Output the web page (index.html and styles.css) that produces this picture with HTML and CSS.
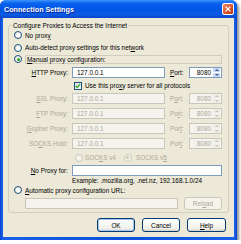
FILE: index.html
```html
<!DOCTYPE html>
<html lang="en">
<head>
  <meta charset="UTF-8">
  <title>Connection Settings</title>
  <link rel="stylesheet" href="styles.css">
</head>
<body>
  <div class="window">
    <!-- Barra de título -->
    <div class="titlebar">
      <span class="title">Connection Settings</span>
      <span class="close">
        <svg viewBox="0 0 10 10" width="8" height="8"><path d="M2 2 L8 8 M8 2 L2 8" stroke="#fff" stroke-width="1.6" /></svg>
      </span>
    </div>

    <div class="client">
      <div class="group">
        <span class="legend">Configure Proxies to Access the Internet</span>

        <div class="opt r1"><span class="radio"></span><span>No prox<u>y</u></span></div>
        <div class="opt r2"><span class="radio"></span><span>Auto-detect proxy settings for this net<u>w</u>ork</span></div>
        <div class="opt r3"><span class="radio on"></span><span class="focus"><u>M</u>anual proxy configuration:</span></div>

        <!-- Servidores proxy -->
        <div class="proxies">
          <label class="lbl"><u>H</u>TTP Proxy:</label>
          <div class="field">127.0.0.1</div>
          <label class="plbl"><u>P</u>ort:</label>
          <div class="field port"><span class="num">8080</span><span class="spin"><i class="up"></i><i class="down"></i></span></div>

          <div class="check-row"><span class="check"><svg viewBox="0 0 8 8" width="6" height="6"><path d="M1 4 L3 6 L7 1.5" fill="none" stroke="#21a121" stroke-width="1.6" /></svg></span><span>Use this pro<u>x</u>y server for all protocols</span></div>

          <label class="lbl off"><u>S</u>SL Proxy:</label>
          <div class="field off">127.0.0.1</div>
          <label class="plbl off">P<u>o</u>rt:</label>
          <div class="field port off"><span class="num">8080</span><span class="spin"><i class="up"></i><i class="down"></i></span></div>

          <label class="lbl off"><u>F</u>TP Proxy:</label>
          <div class="field off">127.0.0.1</div>
          <label class="plbl off">Po<u>r</u>t:</label>
          <div class="field port off"><span class="num">8080</span><span class="spin"><i class="up"></i><i class="down"></i></span></div>

          <label class="lbl off"><u>G</u>opher Proxy:</label>
          <div class="field off">127.0.0.1</div>
          <label class="plbl off">Por<u>t</u>:</label>
          <div class="field port off"><span class="num">8080</span><span class="spin"><i class="up"></i><i class="down"></i></span></div>

          <label class="lbl off">SO<u>C</u>KS Host:</label>
          <div class="field off">127.0.0.1</div>
          <label class="plbl off">Por<u>t</u>:</label>
          <div class="field port off"><span class="num">8080</span><span class="spin"><i class="up"></i><i class="down"></i></span></div>

          <div class="socks off">
            <span class="opt-in"><span class="radio off"></span><span>SOC<u>K</u>S v4</span></span>
            <span class="opt-in"><span class="radio off on"></span><span>SOCKS v<u>5</u></span></span>
          </div>

          <label class="lbl"><u>N</u>o Proxy for:</label>
          <div class="field wide"></div>

          <div class="example">Example: .mozilla.org, .net.nz, 192.168.1.0/24</div>
        </div>

        <div class="opt r4"><span class="radio"></span><span><u>A</u>utomatic proxy configuration URL:</span></div>
        <div class="url-row">
          <div class="field off url"></div>
          <span class="btn off">Rel<u>o</u>ad</span>
        </div>
      </div>

      <!-- Botones -->
      <div class="buttons">
        <span class="btn default">OK</span>
        <span class="btn">Cancel</span>
        <span class="btn"><u>H</u>elp</span>
      </div>
    </div>
  </div>
</body>
</html>
```

FILE: styles.css
```css
* {
  margin: 0;
  padding: 0;
  box-sizing: border-box;
}

body {
  background: #fff;
  font-family: "Liberation Sans", Arial, sans-serif;
  font-size: 6.4px;
  color: #000;
}

u {
  text-decoration: underline;
  text-underline-offset: 0.5px;
}

/* Ventana */
.window {
  width: 237px;
  height: 240px;
  display: flex;
  flex-direction: column;
  background: linear-gradient(to right, #0a3fc8, #1660ea 2px, #0a50dc 50%, #1660ea calc(100% - 2px), #0a3fc8);
  border-radius: 6px 6px 0 0;
  box-shadow: 2px 2px 3px rgba(0, 0, 0, 0.45);
}

.titlebar {
  height: 18px;
  display: flex;
  align-items: center;
  justify-content: space-between;
  padding: 0 3px 0 4px;
  border-radius: 6px 6px 0 0;
  background: linear-gradient(to bottom, #3d95ff 0%, #0a62ec 18%, #0055e8 50%, #0a5ae2 82%, #0847cc 100%);
}

.title {
  color: #fff;
  font-weight: bold;
  font-size: 7.2px;
  text-shadow: 1px 1px 0 #0a1f8a;
}

.close {
  width: 12px;
  height: 12px;
  border: 1px solid #fff;
  border-radius: 2px;
  background: linear-gradient(135deg, #f08c6c, #d4512c 60%, #b83a1a);
  display: flex;
  align-items: center;
  justify-content: center;
}

.client {
  flex: 1;
  margin: 0 3px 3px;
  background: #ece9d8;
  padding: 7px 5px 5px;
}

/* Marco de grupo */
.group {
  position: relative;
  border: 1px solid #d0d0bf;
  border-radius: 3px;
  padding: 3px 0 2px;
}

.legend {
  position: absolute;
  top: -5px;
  left: 3px;
  padding: 0 1px;
  background: #ece9d8;
  color: #000;
  line-height: 9px;
}

.opt {
  display: flex;
  align-items: center;
  gap: 3px;
  padding-left: 5px;
}
.r1 { height: 12px; }
.r2 { height: 13px; }
.r3 { height: 10px; margin-bottom: 1px; }
.r4 { height: 12px; }

.radio {
  width: 8px;
  height: 8px;
  flex: none;
  border: 1px solid #1c5180;
  border-radius: 50%;
  background: radial-gradient(circle at 60% 60%, #fff 30%, #dcd9cd);
  display: flex;
  align-items: center;
  justify-content: center;
}
.radio.on::after {
  content: "";
  width: 3px;
  height: 3px;
  border-radius: 50%;
  background: #21a121;
}
.radio.off {
  border-color: #c9c7ba;
  background: #f5f4ea;
}
.radio.off.on::after {
  background: #c9c7ba;
}

.focus {
  flex: 1;
  height: 9px;
  margin-right: 6px;
  border: 1px solid #cfccbc;
  padding-left: 1px;
  line-height: 7px;
}

/* Rejilla de proxies */
.proxies {
  display: grid;
  grid-template-columns: 63px 93px 24px 33px;
  grid-template-rows: 15px 11px 15px 15px 15px 15px 13px 13px 7px;
  align-items: center;
}

.lbl {
  text-align: right;
  padding-right: 4px;
}
.plbl {
  padding-left: 5px;
}
.off {
  color: #aca899;
}

.field {
  height: 11px;
  border: 1px solid #7f9db9;
  background: #fff;
  padding: 0 4px;
  display: flex;
  align-items: center;
  color: #000;
}
.field.off {
  border-color: #c9c7ba;
  background: #f4f3ee;
  color: #aca899;
}
.field.wide {
  grid-column: 2 / -1;
}

.port {
  padding: 0 1px 0 0;
}
.port .num {
  flex: 1;
  text-align: right;
  padding-right: 2px;
}
.spin {
  width: 7px;
  height: 9px;
  display: flex;
  flex-direction: column;
  gap: 1px;
}
.spin i {
  flex: 1;
  background: #c6d6fa;
  border-radius: 1px;
  display: flex;
  align-items: center;
  justify-content: center;
}
.spin i::after {
  content: "";
  border-left: 2px solid transparent;
  border-right: 2px solid transparent;
}
.spin .up::after { border-bottom: 2px solid #4d6185; }
.spin .down::after { border-top: 2px solid #4d6185; }
.off .spin i { background: #eeede5; }
.off .spin .up::after { border-bottom-color: #c9c7ba; }
.off .spin .down::after { border-top-color: #c9c7ba; }

.check-row {
  grid-column: 2 / -1;
  display: flex;
  align-items: center;
  gap: 3px;
  padding-left: 2px;
}
.check {
  width: 8px;
  height: 8px;
  border: 1px solid #1c5180;
  background: linear-gradient(135deg, #dcdcd7, #fff);
  display: flex;
  align-items: center;
  justify-content: center;
}

.socks {
  grid-column: 2 / -1;
  display: flex;
  align-items: center;
  gap: 8px;
  padding-left: 3px;
}
.opt-in {
  display: flex;
  align-items: center;
  gap: 2px;
}
.socks .opt-in + .opt-in {
  gap: 4px;
}

.example {
  grid-column: 2 / -1;
  line-height: 7px;
}

.url-row {
  height: 14px;
  display: flex;
  align-items: center;
  gap: 6px;
  padding-left: 16px;
}
.field.url {
  width: 153px;
}

/* Botones */
.btn {
  width: 38px;
  height: 14px;
  border: 1px solid #003c74;
  border-radius: 3px;
  background: linear-gradient(to bottom, #fff, #f0f0ea 80%, #d6d0c5);
  display: flex;
  align-items: center;
  justify-content: center;
}
.btn.off {
  height: 13px;
  border-color: #c9c7ba;
  background: #f5f4ea;
  color: #aca899;
}
.btn.default {
  box-shadow: inset 0 0 0 1px #a8c4ee;
}

.buttons {
  display: flex;
  justify-content: flex-end;
  gap: 7px;
  margin: 5px 3px 0 0;
}
.buttons .btn:last-child {
  width: 39px;
}
```
